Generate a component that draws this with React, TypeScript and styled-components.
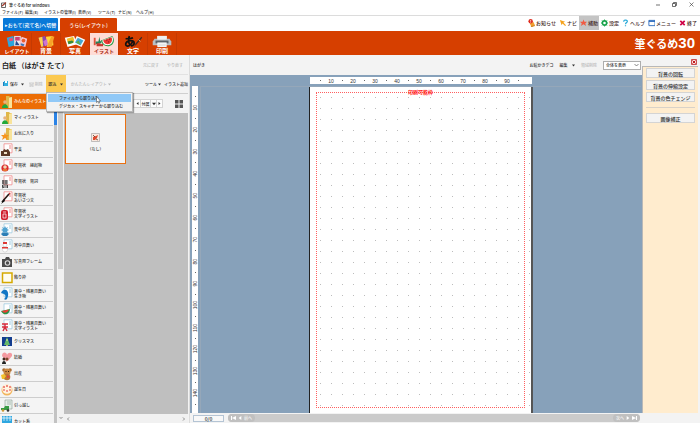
import React from "react";
import styled, { createGlobalStyle, css } from "styled-components";

const GlobalStyle = createGlobalStyle`
  * { box-sizing: border-box; }
  html, body { margin: 0; padding: 0; }
  body {
    font-family: "Noto Sans CJK JP", "Noto Sans", sans-serif;
    font-size: 4px;
    line-height: 6px;
    font-weight: 500;
    color: #2c2c2c;
    background: #f3f3f3;
    overflow: hidden;
  }
  button, select { font: inherit; color: inherit; }
  button { border: 0; padding: 0; margin: 0; background: none; white-space: nowrap; }
  svg { display: block; flex: none; }
  ul { list-style: none; margin: 0; padding: 0; }
`;

/* ---------- shell ---------- */
const Shell = styled.div`
  display: flex;
  flex-direction: column;
  height: 100vh;
  background: #f3f3f3;
`;
const TitleBar = styled.header`
  display: flex;
  align-items: center;
  height: 9px;
  padding: 0 6px 0 1px;
  gap: 2px;
  background: #fff;
`;
const Title = styled.span`
  flex: 1;
  color: #222;
`;
const WindowButtons = styled.div`
  display: flex;
  gap: 12px;
`;
const MenuBar = styled.nav`
  display: grid;
  grid-template-columns: 23px 19px 34px 20px 20px 18px 22px;
  height: 7px;
  padding-left: 2px;
  background: #fff;
  border-bottom: 1px solid #dcdcdc;
`;
const MenuItem = styled.button`
  text-align: left;
  line-height: 6px;
  color: #333;
`;
const TabRow = styled.div`
  display: flex;
  align-items: flex-end;
  height: 15px;
  padding-left: 3px;
  background: #fff;
`;
const SideTab = styled.button<{ $color: string; $width: number }>`
  width: ${(p) => p.$width}px;
  height: 13px;
  margin-right: 2px;
  border-radius: 1px 1px 0 0;
  background: ${(p) => p.$color};
  color: #fff;
  font-size: 5px;
`;
const QuickLinks = styled.div`
  display: flex;
  margin-left: auto;
  height: 15px;
  padding-right: 2px;
`;
const QuickLink = styled.button<{ $active?: boolean }>`
  display: flex;
  align-items: center;
  gap: 1px;
  padding: 0 1px;
  margin-left: 1px;
  height: 14px;
  font-size: 5px;
  color: #401e22;
  background: ${(p) => (p.$active ? "#c4c4c4" : "transparent")};
`;
const Ribbon = styled.div`
  display: flex;
  height: 24px;
  padding-left: 3px;
  background: #d63f00;
`;
const RibbonButton = styled.button<{ $active?: boolean; $kana?: boolean }>`
  display: flex;
  flex-direction: column;
  align-items: center;
  width: 29px;
  height: 22px;
  padding-top: 2px;
  margin-top: 2px;
  border-right: 1px solid #c53a02;
  font-size: ${(p) => (p.$kana ? 5 : 6)}px;
  line-height: 6px;
  font-weight: 700;
  color: ${(p) => (p.$active ? "#a62712" : "#fff")};
  background: ${(p) => (p.$active ? "#ffdcd6" : "transparent")};
`;
const Brand = styled.div`
  display: flex;
  align-items: center;
  margin-left: auto;
  padding-right: 5px;
  color: #fff;
  font-size: 11px;
  line-height: 24px;
  font-weight: 700;
`;
const BrandNumber = styled.span`
  font-family: "Liberation Sans", sans-serif;
  font-size: 15px;
`;
const Workspace = styled.main`
  flex: 1;
  min-height: 0;
  display: grid;
  grid-template-columns: 190px minmax(0, 1fr) 58px;
`;

/* ---------- left pane ---------- */
const LeftPane = styled.section`
  position: relative;
  display: flex;
  flex-direction: column;
  min-height: 0;
  border-right: 1px solid #dcdcdc;
  padding-right: 1px;
`;
const DocHeader = styled.div`
  display: flex;
  align-items: center;
  height: 20px;
  padding: 0 5px 0 2px;
  gap: 8px;
  border-bottom: 1px solid #e2e2e2;
`;
const DocTitle = styled.h1`
  flex: 1;
  margin: 0;
  font-size: 7px;
  line-height: 10px;
  font-weight: 700;
  white-space: nowrap;
  color: #222;
`;
const TextButton = styled.button<{ $muted?: boolean }>`
  display: flex;
  align-items: center;
  gap: 1px;
  line-height: 6px;
  color: ${(p) => (p.$muted ? "#b9b9b9" : "#2c2c2c")};
`;
const Tools = styled.div`
  display: flex;
  align-items: stretch;
  height: 18px;
  padding-left: 3px;
  gap: 5px;
`;
const ImportButton = styled(TextButton)`
  width: 20px;
  margin-left: -2px;
  gap: 4px;
  justify-content: center;
  background: #fbc951;
`;
const ToolsEnd = styled.div`
  display: flex;
  margin-left: auto;
  gap: 3px;
`;
const LeftBody = styled.div`
  flex: 1;
  min-height: 0;
  display: grid;
  grid-template-columns: 53px 5px 6px minmax(0, 1fr);
  border-top: 1px solid #cfcfcf;
`;
const CategoryList = styled.ul`
  min-height: 0;
  overflow: hidden;
`;
const Category = styled.button<{ $active?: boolean }>`
  display: flex;
  align-items: center;
  gap: 1px;
  width: 100%;
  height: 16px;
  padding-left: 1px;
  text-align: left;
  line-height: 5px;
  white-space: pre-line;
  border-bottom: 1px solid #cdcdcd;
  color: ${(p) => (p.$active ? "#fff" : "#333")};
  background: ${(p) => (p.$active ? "#ec6d04" : "#f4f4f4")};
`;
const CategoryTrack = styled.div`
  padding-left: 1px;
  background: #f3f3f3;
  display: flex;
  flex-direction: column;
`;
const TrackPart = styled.div<{ $accent?: boolean }>`
  flex: ${(p) => (p.$accent ? "0 0 31px" : "1")};
  margin-right: 1px;
  background: ${(p) => (p.$accent ? "#2b83e6" : "#c3c3c3")};
`;
const ScrollBar = styled.div`
  display: flex;
  flex-direction: column;
  align-items: center;
  background: #f1f1f1;
  padding: 18px 1px 3px 0;
`;
const ScrollThumb = styled.div`
  width: 5px;
  flex: 0 1 51%;
  background: #cdcdcd;
`;
const ScrollEnd = styled.div`
  margin-top: auto;
`;
const Gallery = styled.div`
  display: flex;
  flex-direction: column;
  min-width: 0;
`;
const GalleryTools = styled.div`
  display: flex;
  align-items: center;
  justify-content: flex-end;
  height: 19px;
  padding: 0 5px 0 0;
  gap: 12px;
`;
const Pager = styled.div`
  display: flex;
  height: 9px;
  border: 1px solid #d4d4d4;
`;
const PagerButton = styled.button<{ $wide?: boolean }>`
  display: flex;
  align-items: center;
  justify-content: center;
  width: ${(p) => (p.$wide ? 10 : 6)}px;
  height: 7px;
  line-height: 6px;
  background: #fcfcfc;
  & + & { border-left: 1px solid #d4d4d4; }
`;
const GalleryCanvas = styled.div`
  flex: 1;
  background: #bfbfbf;
  padding: 1px;
`;
const Thumb = styled.button`
  display: flex;
  flex-direction: column;
  align-items: center;
  justify-content: center;
  gap: 4px;
  width: 61px;
  height: 50px;
  padding-top: 7px;
  border: 1px solid #ea7011;
  background: #f5f5f5;
`;
const GalleryScroll = styled.div`
  display: flex;
  align-items: center;
  justify-content: space-between;
  height: 9px;
  padding: 0 2px;
  background: #f1f1f1;
`;
const DropMenu = styled.div`
  position: absolute;
  left: 46px;
  top: 37px;
  width: 87px;
  padding: 1px;
  border: 1px solid #b8b8b8;
  background: #f2f2f2;
  box-shadow: 1px 1px 1px rgba(0, 0, 0, 0.35);
`;
const DropItem = styled.button<{ $active?: boolean }>`
  display: block;
  width: 100%;
  height: 8px;
  padding-left: 11px;
  text-align: left;
  line-height: 7px;
  background: ${(p) => (p.$active ? "#91c9f7" : "transparent")};
`;
const Pointer = styled.svg`
  position: absolute;
  left: 49px;
  top: 3px;
`;

/* ---------- centre pane ---------- */
const CentrePane = styled.section`
  display: flex;
  flex-direction: column;
  min-width: 0;
  min-height: 0;
`;
const CentreHeader = styled.div`
  display: flex;
  align-items: center;
  height: 20px;
  padding: 0 1px 0 3px;
  gap: 6px;
`;
const PaperName = styled.span`
  flex: 1;
`;
const ZoomSelect = styled.select`
  appearance: none;
  width: 38px;
  height: 9px;
  padding: 0 0 0 2px;
  border: 1px solid #adadad;
  border-radius: 0;
  line-height: 6px;
  background: #fff url("data:image/svg+xml,%3Csvg xmlns='http://www.w3.org/2000/svg' width='5' height='4'%3E%3Cpath d='M.5 1l2 2 2-2' fill='none' stroke='%23555' stroke-width='.7'/%3E%3C/svg%3E") no-repeat right 1px center;
`;
const Board = styled.div`
  flex: 1;
  min-height: 0;
  display: grid;
  grid-template-columns: 6px minmax(0, 1fr);
  grid-template-rows: 7px minmax(0, 1fr);
  gap: 2px 2px;
  padding: 2px 1px 0 2px;
  background: #87a1ba;
`;
const RulerLane = styled.div`
  grid-column: 2;
  display: flex;
  justify-content: center;
`;
const rulerBase = css`
  display: flex;
  background: #fff;
  overflow: hidden;
  font-family: "Liberation Sans", sans-serif;
  font-size: 5px;
  font-weight: 400;
  color: #333;
`;
const RulerX = styled.ul`
  ${rulerBase}
  width: 222px;
  padding-left: 5px;
`;
const RulerY = styled.ul`
  ${rulerBase}
  flex-direction: column;
  padding-top: 5px;
`;
const Mark = styled.li<{ $vertical?: boolean }>`
  flex: 0 0 11px;
  display: flex;
  align-items: center;
  justify-content: center;
  line-height: 6px;
  ${(p) => p.$vertical && css`writing-mode: vertical-rl; span { transform: rotate(180deg); }`}
`;
const Tick = styled.i`
  width: 1px;
  height: 1px;
  background: #666;
`;
const PaperLane = styled.div`
  display: flex;
  justify-content: center;
  min-height: 0;
  border-left: 1px solid #95a7b9;
  border-top: 1px solid #95a7b9;
`;
const Paper = styled.div`
  width: 224px;
  padding: 5px 6px;
  border-left: 1px solid #222;
  border-right: 2px solid #555;
  background-color: #fff;
  background-image: linear-gradient(90deg, #fff 10px, transparent 10px), linear-gradient(#fff 10px, #bcbcbc 10px);
  background-size: 11px 11px;
  background-position: 0 0;
`;
const PrintArea = styled.div`
  height: 100%;
  border: 1px dotted #ff5f5f;
  display: flex;
  justify-content: center;
`;
const PrintLabel = styled.span`
  height: 6px;
  margin-top: -4px;
  font-size: 5px;
  line-height: 6px;
  font-weight: 700;
  color: #ff1616;
`;
const StatusRow = styled.div`
  display: flex;
  align-items: center;
  height: 10px;
  padding: 0 2px 0 3px;
  gap: 4px;
`;
const PageCount = styled.output`
  width: 31px;
  height: 7px;
  border: 1px solid #b4c4d4;
  background: #f8f8f8;
  text-align: center;
  font-size: 5px;
  line-height: 5px;
`;
const PageNav = styled.div`
  flex: 1;
  display: flex;
  align-items: center;
  justify-content: space-between;
  height: 8px;
  border-radius: 4px;
  background: #cbcbcb;
`;
const NavGroup = styled.div`
  display: flex;
  height: 8px;
  align-items: center;
  gap: 2px;
  padding: 0 3px;
  color: #f7f7f7;
  background: #c0c0c0;
  border-radius: 4px;
`;

/* ---------- right pane ---------- */
const RightPane = styled.aside`
  display: flex;
  flex-direction: column;
  padding: 0 2px 10px 0;
`;
const CloseRow = styled.div`
  display: flex;
  justify-content: flex-end;
  height: 11px;
  padding: 2px 1px 0 0;
`;
const ActionPanel = styled.div`
  flex: 1;
  display: flex;
  flex-direction: column;
  gap: 2px;
  padding: 1px 3px;
  border-left: 1px solid #b8b8b8;
  border-top: 1px solid #b8b8b8;
  background: #ffecce;
`;
const ActionButton = styled.button`
  height: 10px;
  border: 1px solid #d4d4d4;
  background: #f3f3f3;
  font-size: 5px;
  line-height: 7px;
`;
const Divider = styled.hr`
  width: 100%;
  height: 1px;
  margin: 3px 0;
  border: 0;
  background: #d9d2c8;
`;

/* ---------- drawings ---------- */
const Caret = ({ dir = "down", size = 3, color = "#333" }: { dir?: string; size?: number; color?: string }) => {
  const paths: Record<string, string> = { down: "M0 1h6L3 5z", left: "M5 0v6L1 3z", right: "M1 0v6l4-3z" };
  return (
    <svg width={size} height={size} viewBox="0 0 6 6">
      <path d={paths[dir]} fill={color} />
    </svg>
  );
};
const Chevron = ({ d }: { d: string }) => (
  <svg width="4" height="4" viewBox="0 0 4 4"><path d={d} fill="none" stroke="#777" strokeWidth=".8" /></svg>
);

const ribbonArt: Record<string, React.ReactNode> = {
  layout: (
    <>
      <path d="M1 3l7-2 2 10-7 2z" fill="#2aa7df" />
      <path d="M3 4l4-1 1 3-4 1z" fill="#e94e77" />
      <path d="M9 1h7v11H9z" fill="#e9eef6" />
      <path d="M10 2h5v4h-5z" fill="#c94178" />
      <path d="M11 6l4 5h-5z" fill="#274a93" />
      <path d="M17 2l6 2-2 9-7-2z" fill="#f3c9d6" />
      <circle cx="19" cy="6" r="2" fill="#ea5d2f" />
      <path d="M16 9l4 1-1 2-3-1z" fill="#3578bb" />
    </>
  ),
  back: (
    <>
      <path d="M4 3l7-2 3 10-7 2z" fill="#8b4bb0" />
      <path d="M4 3l4-1 1 10-2 1z" fill="#fbd34c" />
      <path d="M12 2l7-1 1 10-7 2z" fill="#ffd83b" />
      <path d="M18 1l3 1-3 11-5-1z" fill="#f8a328" />
      <path d="M9 7l4-3 1 6-3 2z" fill="#cf74cf" />
    </>
  ),
  photo: (
    <>
      <path d="M1 3l10-2 3 9-10 3z" fill="#fff" />
      <path d="M3 4l7-2 2 6-7 2z" fill="#f2bf2b" />
      <path d="M4 7l5-1 2 2-6 2z" fill="#388b3a" />
      <path d="M14 1l9 4-4 8-9-4z" fill="#f4faff" />
      <path d="M15 3l6 3-3 5-6-3z" fill="#43a6cf" />
      <path d="M13 8l3-2 2 5z" fill="#5daf4c" />
    </>
  ),
  illust: (
    <>
      <path d="M1 3h2v8H1z" fill="#e4533f" />
      <path d="M3 7h3l1-5 1 5 2-2-1 4-6 1z" fill="#28835a" />
      <path d="M4 9h3l2 1 2-1v3H4z" fill="#c8362e" />
      <path d="M9 6L21 1c4 6 0 11-5 11-4 0-6-2-7-6z" fill="#289a45" />
      <path d="M10 6l11-4c2 5-1 9-5 9-3 0-5-1-6-5z" fill="#fff" />
      <path d="M11 6l9-3.500c2 4-1 7.500-4 7.500-2 0-4-1-5-4z" fill="#ee3833" />
      <path d="M15 5v1m3-2v1m-1 2v1" stroke="#2a1512" strokeWidth=".8" />
    </>
  ),
  text: (
    <>
      <path d="M4 4c4 0 6 0 8-1M8 1c-1 4-1 8 1 10M12 6c-1 3-3 6-6 6-4-1-1-6 3-6 6 0 5 5 1 6" fill="none" stroke="#111" strokeWidth="1.8" />
      <path d="M21 2l-6 7-2 4 3-3 6-7z" fill="#3b2c25" />
      <path d="M18 5l2 2" stroke="#d6b37a" />
    </>
  ),
  print: (
    <>
      <path d="M7 1h10v5H7z" fill="#fff" />
      <path d="M4 4h16l2 3v4H2V7z" fill="#b9bfc3" />
      <path d="M7 1h10v4H7z" fill="#eceff1" />
      <path d="M5 6h14v3H5z" fill="#5c646a" />
      <path d="M7 8h10v5H7z" fill="#fafafa" />
      <path d="M8 10h8M8 11.500h8" stroke="#b9bfc3" strokeWidth=".5" />
    </>
  ),
};
const RibbonIcon = ({ name }: { name: string }) => (
  <svg width="24" height="13" viewBox="0 0 24 14">{ribbonArt[name]}</svg>
);

const folder = (
  <>
    <path d="M5 1h3l1 1h2v11H5z" fill="#e0b74a" />
    <path d="M8 3l3-1v11H8z" fill="#f8e39a" />
  </>
);
const person = (
  <>
    <circle cx="4" cy="7" r="1.8" fill="#e8b27c" />
    <path d="M1 13c0-5 6-5 6 0z" fill="#22a83a" />
  </>
);
const card = (color: string) => (
  <>
    <path d="M3 .8h8v9H3z" fill="#fff" stroke={color} strokeWidth=".8" />
    <path d="M9 2v4" stroke={color} strokeWidth="1" />
  </>
);
const redCard = card("#f08a8a");
const blueCard = card("#9fcbe0");
const categoryArt: Record<string, React.ReactNode> = {
  everyone: <>{folder}{person}</>,
  mine: <>{folder}{person}</>,
  star: <>{folder}<path d="M4 5l1 3h3L6 10l1 3-3-2-3 2 1-3-2-2h3z" fill="#f6941e" /></>,
  zodiac: <>{redCard}<path d="M0 8h2l1-2 2 1 2-1 2 3v4H0z" fill="#5a3925" /><path d="M3 9h3v2H3z" fill="#efe0c5" /></>,
  lucky: <>{redCard}<circle cx="4" cy="9" r="3.6" fill="#d9292b" /><circle cx="4" cy="8" r="1.8" fill="#f4d4b0" /><path d="M2 11h4" stroke="#f2c12e" /></>,
  greeting: <>{redCard}<path d="M1 6h6M1 8h6M2 5v4m3-4v4M1.500 10h5v2h-5zM1 13l2-1m3 0l1 1" fill="none" stroke="#222" strokeWidth=".8" /></>,
  brush: <>{redCard}<path d="M8 3L1 11" stroke="#2b1b16" strokeWidth="1.6" /><path d="M3 8l-3 5 4-3z" fill="#111" /><path d="M8 3l1-1" stroke="#c33" strokeWidth="1.5" /></>,
  word: <>{redCard}<rect x="0" y="3" width="7" height="10" rx="2" fill="#d0202e" /><path d="M2 5h3M2 7h3v4H2z" fill="none" stroke="#fff" strokeWidth=".7" /></>,
  mourning: <>{blueCard}<path d="M4 3l1 2 2-1-1 2 2 1-2 1 1 2-3-1-3 1 1-2-2-1 2-1-1-2 2 1z" fill="#51a3d1" /><path d="M0 11c2-2 6-2 8 0l-2 2H2z" fill="#2a7db5" /></>,
  winter: <>{blueCard}<circle cx="4" cy="6" r="2" fill="#fff" stroke="#999" strokeWidth=".3" /><circle cx="4" cy="10.500" r="2.600" fill="#fff" stroke="#999" strokeWidth=".3" /><path d="M1 8h6v1.500H1zM2 3h4v2H2z" fill="#dd3a35" /></>,
  camera: <><path d="M1 4h3l1-2h3l1 2h2v8H1z" fill="#4b4b4b" /><circle cx="6.500" cy="8" r="2.800" fill="#ddd" /><circle cx="6.500" cy="8" r="1.700" fill="#4b4b4b" /></>,
  frame: <rect x="1.500" y="2" width="9.500" height="9.500" fill="#fffdf0" stroke="#d5a900" strokeWidth="1.500" />,
  dolphin: <>{blueCard}<path d="M1 4c5-4 8 2 5 8-1 1-2 1-3 0 2-1 2-4 0-5-1 0-2-1-3-1z" fill="#1276c5" /></>,
  melon: <>{blueCard}<path d="M0 8l9-2c0 5-6 8-9 2z" fill="#279447" /><path d="M1 8l7-1.500c-1 3-5 4.500-7 1.500z" fill="#ee3c34" /></>,
  summer: <>{blueCard}<path d="M1 5h6M4 5v4M2 12l2-4 2 4M1 8h6" fill="none" stroke="#d82b3d" strokeWidth="1.400" /></>,
  xmas: <><path d="M1 2h10v10H1z" fill="#143d8f" /><path d="M6 2l3 8H3z" fill="#65b86b" /><path d="M6 10v2" stroke="#f5e06c" strokeWidth="1.500" /><circle cx="6" cy="5" r=".8" fill="#fff5a0" /><path d="M1 11h10v1H1z" fill="#eaf3ff" /></>,
  wedding: <><path d="M6 11L1 5c0-5 5-4 5-1 1-3 6-3 5 1z" fill="#f49aa0" /><circle cx="3" cy="8" r="1.500" fill="#40281e" /><circle cx="6" cy="8" r="1.500" fill="#7a4a2c" /><path d="M1 13c0-4 4-4 4 0z" fill="#222" /><path d="M5 13c0-4 4-4 4 0z" fill="#fff" /></>,
  baby: <><circle cx="3" cy="3" r="1.800" fill="#a96a2f" /><circle cx="9" cy="3" r="1.800" fill="#a96a2f" /><circle cx="6" cy="5" r="3.500" fill="#c98742" /><circle cx="6" cy="10" r="3.300" fill="#b87635" /><path d="M0 8l3-1 2 2-2 3H1z" fill="#f3c02c" /><path d="M6 8l3 2-3 1z" fill="#e4413c" /><circle cx="5" cy="4.500" r=".5" /><circle cx="7.500" cy="4.500" r=".5" /></>,
  birthday: <><circle cx="6" cy="7" r="5.500" fill="#f2b45c" /><circle cx="6" cy="6" r="4.800" fill="#fff4e2" /><path d="M3 3v2m3-3v2m3-1v2M2 7h2m1 1h2m1-1h2" stroke="#e54440" strokeWidth="1.200" /></>,
  moving: <><path d="M4 1h7v9H4z" fill="#e6efe9" stroke="#8b9c93" strokeWidth=".6" /><path d="M6 3h4M6 5h4" stroke="#8b9c93" strokeWidth=".6" /><path d="M0 9h3l1-2h4v4H0z" fill="#3a9c46" /><circle cx="2" cy="11.500" r="1.300" fill="#c93" /><circle cx="7" cy="11.500" r="1.300" fill="#333" /></>,
  card: <><path d="M1 1h10v10H1z" fill="#2fa7e0" /><path d="M1 3h10M3 1v5M6 1v5M9 1v5" stroke="#fff" strokeWidth=".7" /></>,
};
const CategoryIcon = ({ name }: { name: string }) => (
  <svg width="12" height="14" viewBox="0 0 12 14">{categoryArt[name]}</svg>
);

const quickArt: Record<string, React.ReactNode> = {
  news: <><path d="M2 5l4-2 2 4-4 2z" fill="#f2a032" /><path d="M3 8l5-1v1L4 9z" fill="#c97c18" /><circle cx="3" cy="2.500" r="2.500" fill="#df2a1e" /><path d="M3 1v2m0 .5v.7" stroke="#fff" strokeWidth=".8" /></>,
  navi: <path d="M1 1l6 2-2 1 3 3-1 1-3-3-1 2z" fill="#f5a11a" />,
  star: <path d="M4 .5l1 2.500h3L6 5l1 3-3-2-3 2 1-3-2-2h3z" fill="#f05a42" />,
  gear: <><circle cx="4" cy="4.500" r="2.400" fill="none" stroke="#17a24a" strokeWidth="1.800" /><path d="M4 .5v1.500M4 7v1.500M0 4.500h1.500M6.500 4.500H8M1.200 1.700l1 1M5.800 6.300l1 1M6.800 1.700l-1 1M2.200 6.300l-1 1" stroke="#17a24a" /></>,
  help: <path d="M2 3c0-3 5-2 4 0-.5 1-2 1-2 3m0 1v1.200" fill="none" stroke="#27a9d8" strokeWidth="1.400" />,
  menu: <><path d="M1 1.500h7v6H1z" fill="#fff" stroke="#2868bd" strokeWidth="1" /><path d="M1 2.500h7" stroke="#2868bd" strokeWidth="1.500" /></>,
  exit: <path d="M1.500 2l5 5m0-5l-5 5" stroke="#d00045" strokeWidth="1.900" />,
};

const menus = ["ファイル(F)", "編集(E)", "イラストの管理(I)", "表示(V)", "ツール(T)", "ナビ(N)", "ヘルプ(H)"];
const quick = [
  ["news", "お知らせ"], ["navi", "ナビ"], ["star", "補助"], ["gear", "設定"],
  ["help", "ヘルプ"], ["menu", "メニュー"], ["exit", "終了"],
];
const ribbon = [
  ["layout", "レイアウト"], ["back", "背景"], ["photo", "写真"],
  ["illust", "イラスト"], ["text", "文字"], ["print", "印刷"],
];
const categories = [
  ["everyone", "みんなのイラスト"], ["mine", "マイ イラスト"], ["star", "お気に入り"], ["zodiac", "干支"],
  ["lucky", "年賀状　縁起物"], ["greeting", "年賀状　賀詞"], ["brush", "年賀状\nあいさつ文"], ["word", "年賀状\n文字イラスト"],
  ["mourning", "喪中欠礼"], ["winter", "寒中見舞い"], ["camera", "写真用フレーム"], ["frame", "飾り枠"],
  ["dolphin", "暑中・残暑見舞い\n生き物"], ["melon", "暑中・残暑見舞い\n風物"], ["summer", "暑中・残暑見舞い\n文字イラスト"],
  ["xmas", "クリスマス"], ["wedding", "結婚"], ["baby", "出産"], ["birthday", "誕生日"], ["moving", "引っ越し"], ["card", "カット系"],
];
const marks = (count: number) => Array.from({ length: count }, (_, i) => i + 1);

export default function App() {
  return (
    <Shell>
      <GlobalStyle />
      <TitleBar>
        <svg width="6" height="6" viewBox="0 0 6 6">
          <path d="M.5 1h4v4.500h-4z" fill="#fff" stroke="#444" strokeWidth=".8" />
          <path d="M1 4l4-3.500" stroke="#a43b2c" strokeWidth="1.200" />
        </svg>
        <Title>筆ぐるめ for Windows</Title>
        <WindowButtons>
          <button aria-label="最小化"><svg width="4" height="5" viewBox="0 0 4 5"><path d="M0 3h4" stroke="#333" strokeWidth=".7" /></svg></button>
          <button aria-label="元のサイズ"><svg width="5" height="5" viewBox="0 0 5 5"><path d="M.5 1.500h3v3h-3zM1.500 1.500v-1h3v3h-1" fill="none" stroke="#333" strokeWidth=".7" /></svg></button>
          <button aria-label="閉じる"><svg width="5" height="5" viewBox="0 0 5 5"><path d="M.5.5l4 4m0-4l-4 4" stroke="#333" strokeWidth=".6" /></svg></button>
        </WindowButtons>
      </TitleBar>
      <MenuBar>{menus.map((m) => <MenuItem key={m}>{m}</MenuItem>)}</MenuBar>
      <TabRow>
        <SideTab $color="#0879d8" $width={55}>▸おもて(宛て名)へ切替</SideTab>
        <SideTab $color="#d63f00" $width={57}>うら(レイアウト)</SideTab>
        <QuickLinks>
          {quick.map(([icon, label]) => (
            <QuickLink key={icon} $active={icon === "star"}>
              <svg width="7" height="8" viewBox="0 0 8 9">{quickArt[icon]}</svg>
              {label}
            </QuickLink>
          ))}
        </QuickLinks>
      </TabRow>
      <Ribbon>
        {ribbon.map(([icon, label]) => (
          <RibbonButton key={icon} $active={icon === "illust"} $kana={label.length > 2}>
            <RibbonIcon name={icon} />
            {label}
          </RibbonButton>
        ))}
        <Brand>筆ぐるめ<BrandNumber>30</BrandNumber></Brand>
      </Ribbon>

      <Workspace>
        <LeftPane>
          <DocHeader>
            <DocTitle>白紙 （はがき たて）</DocTitle>
            <TextButton $muted>元に戻す</TextButton>
            <TextButton $muted>やり直す</TextButton>
          </DocHeader>
          <Tools>
            <TextButton>
              <svg width="6" height="6" viewBox="0 0 6 6"><path d="M0 1h2v4H0z" fill="#1e7ec0" /><path d="M1 0h4v5H1z" fill="#35b0de" /><path d="M2 0h2v2H2z" fill="#fff" /></svg>
              保存&nbsp;&nbsp;<Caret />
            </TextButton>
            <TextButton $muted>
              <svg width="5" height="5" viewBox="0 0 5 5"><path d="M0 1h5M1 1v4h3V1M2 2v2m1-2v2" fill="none" stroke="#bbb" strokeWidth=".6" /></svg>
              削除
            </TextButton>
            <ImportButton aria-haspopup="menu" aria-expanded="true">取込<Caret /></ImportButton>
            <TextButton $muted>かんたんレイアウト<Caret color="#b9b9b9" /></TextButton>
            <ToolsEnd>
              <TextButton>ツール<Caret /></TextButton>
              <TextButton>イラスト追加</TextButton>
            </ToolsEnd>
          </Tools>
          <LeftBody>
            <CategoryList>
              {categories.map(([icon, label], i) => (
                <li key={icon}>
                  <Category $active={i === 0}><CategoryIcon name={icon} />{label}</Category>
                </li>
              ))}
            </CategoryList>
            <CategoryTrack><TrackPart $accent /><TrackPart /></CategoryTrack>
            <ScrollBar>
              <ScrollThumb />
              <ScrollEnd><Chevron d="M.5 1l1.500 1.500L3.500 1" /></ScrollEnd>
            </ScrollBar>
            <Gallery>
              <GalleryTools>
                <Pager>
                  <PagerButton aria-label="前"><Caret dir="left" /></PagerButton>
                  <PagerButton $wide>付属</PagerButton>
                  <PagerButton aria-label="一覧"><Caret size={4} /></PagerButton>
                  <PagerButton aria-label="次"><Caret dir="right" /></PagerButton>
                </Pager>
                <button aria-label="一覧表示">
                  <svg width="8" height="8" viewBox="0 0 8 8"><path d="M0 0h3.500v3.500H0zM4.500 0H8v3.500H4.500zM0 4.500h3.500V8H0zM4.500 4.500H8V8H4.500z" fill="#555" /></svg>
                </button>
              </GalleryTools>
              <GalleryCanvas>
                <Thumb>
                  <svg width="9" height="9" viewBox="0 0 9 9">
                    <path d="M.5.5h8v8h-8z" fill="#fbe9df" stroke="#a8a8a8" strokeWidth=".7" />
                    <path d="M2 4l3-1 2-1-1 3-2 2H2z" fill="#df4a2f" />
                    <path d="M2 2l2 2M5 6l2 1" stroke="#5b3b2b" strokeWidth=".8" />
                  </svg>
                  （なし）
                </Thumb>
              </GalleryCanvas>
              <GalleryScroll><Chevron d="M3 .5L1.500 2 3 3.500" /><Chevron d="M1 .5L2.500 2 1 3.500" /></GalleryScroll>
            </Gallery>
          </LeftBody>
          <DropMenu role="menu">
            <DropItem role="menuitem" $active>ファイルから取り込む</DropItem>
            <DropItem role="menuitem">デジカメ・スキャナーから取り込む</DropItem>
            <Pointer width="5" height="8" viewBox="0 0 5 8">
              <path d="M.5.5v6l1.300-1.200.9 2 .9-.4-.9-1.900h1.800z" fill="#fff" stroke="#333" strokeWidth=".5" />
            </Pointer>
          </DropMenu>
        </LeftPane>

        <CentrePane>
          <CentreHeader>
            <PaperName>はがき</PaperName>
            <TextButton>お絵かきデコ</TextButton>
            <TextButton>編集&nbsp;&nbsp;&nbsp;&nbsp;<Caret /></TextButton>
            <TextButton $muted>領域削除</TextButton>
            <ZoomSelect aria-label="表示倍率"><option>全体を表示</option></ZoomSelect>
          </CentreHeader>
          <Board>
            <RulerLane>
              <RulerX>{marks(19).map((n) => <Mark key={n}>{n % 2 ? <Tick /> : <span>{n * 5}</span>}</Mark>)}</RulerX>
            </RulerLane>
            <RulerY>{marks(29).map((n) => <Mark key={n} $vertical>{n % 2 ? <Tick /> : <span>{n * 5}</span>}</Mark>)}</RulerY>
            <PaperLane>
              <Paper><PrintArea><PrintLabel>印刷可能枠</PrintLabel></PrintArea></Paper>
            </PaperLane>
          </Board>
          <StatusRow>
            <PageCount>0/0</PageCount>
            <PageNav>
              <NavGroup>
                <svg width="5" height="4" viewBox="0 0 5 4"><path d="M0 0h1v4H0zM5 0v4L1 2z" fill="#fff" /></svg>
                <Caret dir="left" size={4} color="#fff" />
                前へ
              </NavGroup>
              <NavGroup>
                次へ
                <Caret dir="right" size={4} color="#fff" />
                <svg width="5" height="4" viewBox="0 0 5 4"><path d="M4 0h1v4H4zM0 0v4l4-2z" fill="#fff" /></svg>
              </NavGroup>
            </PageNav>
          </StatusRow>
        </CentrePane>

        <RightPane>
          <CloseRow>
            <button aria-label="パネルを閉じる">
              <svg width="6" height="6" viewBox="0 0 6 6"><path d="M.5.5h5v5h-5z" fill="#f8dada" stroke="#c63c3c" strokeWidth=".9" /><path d="M1.500 1.500l3 3m0-3l-3 3" stroke="#c11b1b" strokeWidth="1" /></svg>
            </button>
          </CloseRow>
          <ActionPanel>
            <ActionButton>背景の回転</ActionButton>
            <ActionButton>背景の伸縮設定</ActionButton>
            <ActionButton>背景の色チェンジ</ActionButton>
            <Divider />
            <ActionButton>画像補正</ActionButton>
          </ActionPanel>
        </RightPane>
      </Workspace>
    </Shell>
  );
}
